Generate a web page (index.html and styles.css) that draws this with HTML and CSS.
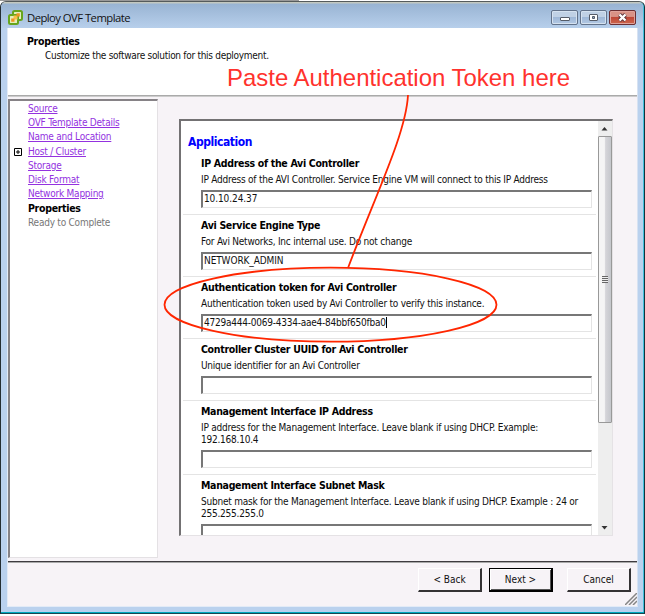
FILE: index.html
```html
<!DOCTYPE html>
<html lang="en">
<head>
<meta charset="utf-8">
<title>Deploy OVF Template</title>
<link rel="stylesheet" href="styles.css">
</head>
<body>
<div class="backdrop"></div>
<div class="window">
  <header class="titlebar">
    <svg class="logo" width="15" height="15" viewBox="0 0 15 15">
      <rect x="5" y="1" width="9" height="9" rx="1.5" fill="#e5efbc" stroke="#66a51d" stroke-width="2"/>
      <rect x="1" y="5" width="9" height="9" rx="1.5" fill="#e5efbc" stroke="#66a51d" stroke-width="2"/>
      <path d="M5.500 5.500h4v4h-4z" fill="#f7c04a"/>
      <path d="M8.500 3.200h3.300v3.300h-3.300zM3.200 8.500h3.300v3.300h-3.300z" fill="#ec9420"/>
    </svg>
    <span class="caption">Deploy OVF Template</span>
    <div class="controls">
      <span class="ctl"><svg width="25" height="13" viewBox="0 0 25 13"><rect x="8.500" y="6.500" width="9" height="3" rx=".5" fill="#fff" stroke="#555c68"/></svg></span>
      <span class="ctl"><svg width="25" height="13" viewBox="0 0 25 13"><rect x="8.500" y="3.500" width="8" height="6" rx=".5" fill="#fff" stroke="#555c68"/><path d="M11.500 5.500h2v2h-2z" fill="#91a8c6" stroke="#555c68"/></svg></span>
      <span class="ctl close"><svg width="25" height="13" viewBox="0 0 25 13"><path d="M9.500 3.500l6 6M15.500 3.500l-6 6" stroke="#59333a" stroke-width="4"/><path d="M9.500 3.500l6 6M15.500 3.500l-6 6" stroke="#fff" stroke-width="2.400"/></svg></span>
    </div>
  </header>
  <div class="client">
    <section class="banner">
      <h1>Properties</h1>
      <p>Customize the software solution for this deployment.</p>
    </section>
    <main class="content">
      <nav class="steps">
        <a>Source</a>
        <a>OVF Template Details</a>
        <a>Name and Location</a>
        <div class="expandable"><svg width="8" height="8" viewBox="0 0 8 8"><path d="M.5.5h7v7h-7zM2 4h4M4 2v4" fill="none" stroke="#000"/></svg><a>Host / Cluster</a></div>
        <a>Storage</a>
        <a>Disk Format</a>
        <a>Network Mapping</a>
        <b>Properties</b>
        <span>Ready to Complete</span>
      </nav>
      <section class="panel">
        <div class="form">
          <h2>Application</h2>
          <div class="field"><h3>IP Address of the Avi Controller</h3><p>IP Address of the AVI Controller. Service Engine VM will connect to this IP Address</p><div class="input ip">10.10.24.37</div></div>
          <div class="field"><h3>Avi Service Engine Type</h3><p>For Avi Networks, Inc internal use. Do not change</p><div class="input admin">NETWORK_ADMIN</div></div>
          <div class="field"><h3>Authentication token for Avi Controller</h3><p>Authentication token used by Avi Controller to verify this instance.</p><div class="input token">4729a444-0069-4334-aae4-84bbf650fba0<i class="caret"></i></div></div>
          <div class="field"><h3>Controller Cluster UUID for Avi Controller</h3><p>Unique identifier for an Avi Controller</p><div class="input"></div></div>
          <div class="field"><h3>Management Interface IP Address</h3><p>IP address for the Management Interface. Leave blank if using DHCP. Example:<br>192.168.10.4</p><div class="input"></div></div>
          <div class="field"><h3>Management Interface Subnet Mask</h3><p>Subnet mask for the Management Interface. Leave blank if using DHCP. Example : 24 or<br>255.255.255.0</p><div class="input"></div></div>
        </div>
        <div class="scrollbar">
          <svg class="arrow" width="13" height="15" viewBox="0 0 13 15"><path d="M3.500 9.500L6.500 6l3 3.500z" fill="#333"/></svg>
          <div class="thumb"><span class="grip"></span></div>
          <svg class="arrow" width="13" height="15" viewBox="0 0 13 15"><path d="M3.500 6l3 3.500 3-3.500z" fill="#333"/></svg>
        </div>
      </section>
    </main>
    <footer class="footer">
      <button>&lt; Back</button>
      <button class="default">Next &gt;</button>
      <button class="cancel">Cancel</button>
      <svg class="resize" width="12" height="12" viewBox="0 0 12 12"><path d="M0 12L12 0M4 12l8-8M8 12l4-4" stroke="#858585" stroke-width="1.500"/></svg>
    </footer>
  </div>
</div>
<svg class="annotation" width="645" height="616" viewBox="0 0 645 616">
  <text x="227" y="86" textLength="343" lengthAdjust="spacingAndGlyphs">Paste Authentication Token here</text>
  <path d="M408 95C406 134 375 196 348 268"/>
  <ellipse cx="330.500" cy="304.700" rx="166" ry="37"/>
</svg>
</body>
</html>
```
FILE: styles.css
```css
* { box-sizing: border-box; }
body { margin: 0; width: 645px; height: 616px; overflow: hidden; background: #fff; color: #111; font: 10px/12px "DejaVu Sans Condensed", "DejaVu Sans", sans-serif; font-stretch: condensed; letter-spacing: -.23px; }
h1, h2, h3, p { margin: 0; }
.backdrop { height: 1px; width: 299px; background: #999; }
.window { width: 645px; height: 613px; border: 1px solid #242d32; border-top: 1px solid #555b5c; border-right: 1px solid #12323b; border-bottom: 1px solid #194651; border-radius: 6px 6px 0 0; background: #bad1ee; padding: 0 6px 5px; box-shadow: inset 0 -1px #00a9c0, inset -1px 0 #40c0dc; }
.titlebar { height: 26px; margin: 0 -5px 0 -6px; padding: 0 7px; display: flex; align-items: center; background: linear-gradient(#c3c8c0 0 1px, #99b4d3 2px, #b7cfeb 26px); border-radius: 5px 5px 0 0; }
.logo { margin-top: 5px; }
.caption { margin: 6px 0 0 4px; font: 11.3px/16px "Open Sans", sans-serif; font-stretch: normal; letter-spacing: -.55px; }
.controls { margin: 8px 0 0 auto; display: flex; gap: 2px; align-self: flex-start; }
.ctl { width: 27px; height: 15px; border: 1px solid #62728a; border-radius: 2px; background: linear-gradient(#c0d1e5 45%, #9fb8d7 50%, #b3c9e4); box-shadow: inset 0 0 0 1px #d5e2f0; }
.ctl svg { display: block; }
.close { border-color: #6b2e32; background: linear-gradient(#d99286 42%, #be4636 48%, #cd674e); box-shadow: inset 0 0 0 1px #dfa29a; }
.client { height: 579px; border-left: 1px solid #e3ebf7; border-right: 1px solid #d7e2f2; border-bottom: 1px solid #e3ebf7; background: #f7f3f7; display: flex; flex-direction: column; }
.banner { height: 68px; background: #fff; border-bottom: 1px solid #aaa; box-shadow: 0 1px #ccc; padding: 7px 0 0 19px; }
h1 { font-size: 10.5px; line-height: 12px; color: #000; letter-spacing: -.3px; }
.banner p { margin: 3px 0 0 18px; letter-spacing: -.29px; }
.content { height: 465px; padding: 3px 24px 0 0; display: flex; align-items: flex-start; justify-content: space-between; }
.steps { width: 150px; height: 459px; background: #fff; border: 2px solid #868286; border-right: 1px solid #e4e1e4; border-bottom: 1px solid #e4e1e4; display: flex; flex-direction: column; align-items: flex-start; line-height: 14.200px; padding: 1px 0 0 18px; }
.steps a { color: #9332df; text-decoration: underline; }
.expandable { margin-left: -14px; display: flex; align-items: center; gap: 6px; }
.steps span { color: #777; }
.steps b { color: #000; font-size: 10.5px; letter-spacing: -.3px; }
.panel { width: 434px; height: 417px; margin-top: 20px; background: #fff; border: 2px solid #737173; border-right: 1px solid #e5e2e5; border-bottom: 1px solid #e5e2e5; display: flex; }
.form { width: 417px; overflow: hidden; padding-left: 2px; }
h2 { height: 32px; padding: 13px 0 0 5px; font-size: 12px; line-height: 16px; color: #00f; letter-spacing: -.45px; }
.field { border-bottom: 1px solid #e4e4e4; padding: 4px 5px 6px 18px; margin-right: 2px; }
h3 { font-size: 10.5px; line-height: 12px; color: #000; letter-spacing: -.31px; }
.field p { margin-top: 5px; white-space: nowrap; }
.input { height: 18px; margin-top: 4px; margin-right: -1px; border: 1px solid #e4e4e4; border-top: 2px solid #777; border-left: 2px solid #777; padding: 0 1px; line-height: 13px; }
.ip, .admin { letter-spacing: -.1px; }
.caret { display: inline-block; width: 1px; height: 11px; background: #000; vertical-align: -2px; }
.scrollbar { width: 14px; background: #eee; display: flex; flex-direction: column; }
.arrow { flex: none; }
.thumb { height: 287px; margin-bottom: auto; border: 1px solid #999; border-radius: 1px; background: linear-gradient(90deg, #f5f5f5 45%, #d5d5d9 55%, #c5c7cc); display: flex; align-items: center; justify-content: center; }
.grip { width: 6px; height: 7px; background: repeating-linear-gradient(#666 0 1px, #eee 1px 2px); }
.footer { flex: 1; position: relative; border-top: 1px solid #3f3c40; box-shadow: inset 0 1px #aaa; padding: 6px 6px 0; display: flex; justify-content: flex-end; gap: 7px; }
button { width: 64px; height: 24px; padding: 0; border: 1px solid #fff; border-right: 2px solid #343234; border-bottom: 2px solid #343234; background: #f7f3f7; color: #111; font: inherit; }
.default { border: 1px solid #000; border-right-width: 2px; border-bottom-width: 2px; box-shadow: inset 1px 1px #fff, inset -1px -1px #555; }
.cancel { margin-left: 7px; }
.resize { position: absolute; right: 0; bottom: 1px; }
.annotation { position: absolute; left: 0; top: 0; fill: none; stroke: #ff2600; stroke-width: 1.800px; }
.annotation text { font: 24px "Liberation Sans", sans-serif; fill: #ff322d; stroke: none; letter-spacing: 0; }
```
